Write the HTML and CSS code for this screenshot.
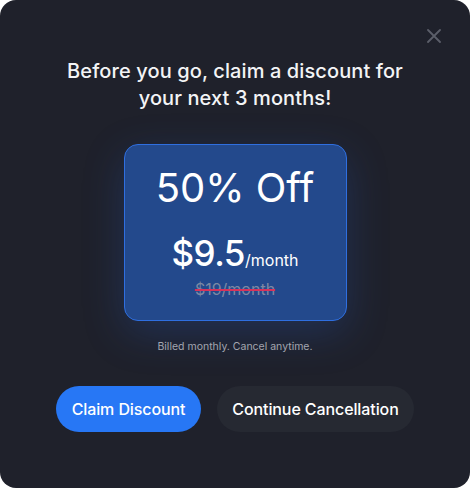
FILE: index.html
```html
<!DOCTYPE html>
<html lang="en">
<head>
    <meta charset="UTF-8">
    <meta name="viewport" content="width=device-width, initial-scale=1.0">
    <title>Cancel Subscription</title>
    <link rel="stylesheet" href="styles.css">
</head>
<body>
    <div class="modal">
        <button class="close" type="button" aria-label="Close">
            <svg width="14" height="14" viewBox="0 0 14 14" fill="none">
                <path d="M1 1L13 13M13 1L1 13" stroke="#5b5e69" stroke-width="1.8" stroke-linecap="round"/>
            </svg>
        </button>
        <h1>Before you go, claim a discount for<br>your next 3 months!</h1>
        <div class="offer">
            <div class="offer-title">50% Off</div>
            <div class="price">$9.5<span>/month</span></div>
            <div class="old-price">$19/month</div>
        </div>
        <p class="note">Billed monthly. Cancel anytime.</p>
        <div class="actions">
            <button type="button" class="btn btn-primary">Claim Discount</button>
            <button type="button" class="btn btn-secondary">Continue Cancellation</button>
        </div>
    </div>
</body>
</html>
```

FILE: styles.css
```css
* {
    margin: 0;
    padding: 0;
    box-sizing: border-box;
}
body {
    font-family: 'Inter', 'Noto Sans', sans-serif;
    background: #ffffff;
    width: 470px;
    height: 488px;
    overflow: hidden;
}
.modal {
    position: relative;
    width: 470px;
    height: 488px;
    background: #1f212b;
    border-radius: 16px;
    display: flex;
    flex-direction: column;
    align-items: center;
    padding-top: 58px;
}
.close {
    position: absolute;
    top: 29px;
    right: 29px;
    width: 14px;
    height: 14px;
    background: none;
    border: none;
    cursor: pointer;
    display: flex;
}
h1 {
    color: #f3f4f6;
    font-size: 20px;
    font-weight: 500;
    line-height: 27px;
    text-align: center;
    letter-spacing: 0.1px;
}
.offer {
    margin-top: 32px;
    width: 223px;
    height: 177px;
    background: #23498c;
    border: 1px solid #2f6fe0;
    border-radius: 14px;
    box-shadow: 0 12px 40px rgba(40, 90, 190, 0.28);
    display: flex;
    flex-direction: column;
    align-items: center;
    color: #ffffff;
    padding-top: 20px;
}
.offer-title {
    font-size: 40px;
    font-weight: 400;
    line-height: 46px;
    letter-spacing: 0;
}
.price {
    margin-top: 22px;
    font-size: 35px;
    font-weight: 500;
    line-height: 40px;
    letter-spacing: -0.5px;
}
.price span {
    font-size: 16px;
    font-weight: 400;
    letter-spacing: 0;
}
.old-price {
    font-size: 16px;
    line-height: 18px;
    color: #7b88a3;
    text-decoration: line-through;
    text-decoration-color: #d8325a;
    text-decoration-thickness: 2px;
}
.note {
    margin-top: 19px;
    font-size: 10.5px;
    color: #a3a6b0;
}
.actions {
    margin-top: 33px;
    display: flex;
    gap: 16px;
}
.btn {
    height: 46px;
    border: none;
    border-radius: 23px;
    font-family: inherit;
    font-size: 16px;
    font-weight: 500;
    letter-spacing: -0.1px;
    color: #ffffff;
    cursor: pointer;
}
.btn-primary {
    width: 145px;
    background: #2777f5;
}
.btn-secondary {
    width: 197px;
    background: #262932;
}
```
